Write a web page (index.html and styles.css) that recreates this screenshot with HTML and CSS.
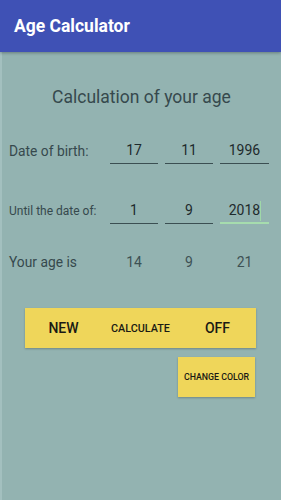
FILE: index.html
```html
<!DOCTYPE html>
<html>
<head>
<meta charset="utf-8">
<link rel="stylesheet" href="styles.css">
</head>
<body>
<div class="app">
  <header class="appbar">Age Calculator</header>
  <main class="content">
    <h1 class="title">Calculation of your age</h1>
    <div class="row row-birth">
      <span class="label">Date of birth:</span>
      <span class="field">17</span>
      <span class="field">11</span>
      <span class="field">1996</span>
    </div>
    <div class="row row-until">
      <span class="label label-small">Until the date of:</span>
      <span class="field">1</span>
      <span class="field">9</span>
      <span class="field field-active">2018<span class="cursor"></span></span>
    </div>
    <div class="row row-age">
      <span class="label">Your age is</span>
      <span class="value">14</span>
      <span class="value">9</span>
      <span class="value">21</span>
    </div>
    <div class="bar">
      <span class="btn btn-big">NEW</span>
      <span class="btn btn-small">CALCULATE</span>
      <span class="btn btn-big">OFF</span>
    </div>
    <div class="actions">
      <span class="change">CHANGE COLOR</span>
    </div>
  </main>
</div>
</body>
</html>
```
FILE: styles.css
```css
html, body {
  margin: 0;
  padding: 0;
}
body {
  font-family: Roboto, "Liberation Sans", sans-serif;
  background: #93b3b1;
  width: 281px;
  height: 500px;
  overflow: hidden;
}
.app {
  height: 500px;
  border-left: 2px solid #a3c0bf;
  box-sizing: border-box;
}
.appbar {
  height: 52px;
  background: #3f51b5;
  color: #ffffff;
  font-size: 17.5px;
  font-weight: 700;
  line-height: 52px;
  padding-left: 14px;
  margin-left: -2px;
  box-shadow: 0 1px 3px rgba(0,0,0,0.3);
  position: relative;
}
.title {
  margin: 33px 0 0;
  font-size: 17.5px;
  font-weight: 400;
  color: #36494d;
  text-align: center;
  line-height: 24px;
}
.row {
  display: grid;
  grid-template-columns: 94px 48px 48px 49px;
  column-gap: 7px;
  align-items: end;
  padding-left: 7px;
  color: #36494d;
}
.row-birth {
  margin-top: 30px;
}
.row-until {
  margin-top: 35px;
}
.row-age {
  margin-top: 27px;
}
.label {
  font-size: 13.8px;
  line-height: 22px;
  padding-bottom: 2px;
  white-space: nowrap;
}
.label-small {
  font-size: 12px;
}
.field {
  position: relative;
  text-align: center;
  font-size: 14px;
  line-height: 22px;
  color: #1e2a2c;
  border-bottom: 1px solid #3b4f52;
  padding-bottom: 2px;
}
.field-active {
  border-bottom: 2px solid #a6dcae;
  padding-bottom: 1px;
}
.cursor {
  position: absolute;
  right: 8px;
  top: 2px;
  width: 1px;
  height: 20px;
  background: #9fd8a8;
}
.value {
  text-align: center;
  font-size: 14px;
  line-height: 22px;
  color: #3d5154;
  padding-bottom: 2px;
}
.bar {
  margin: 33px 0 0 23px;
  height: 40px;
  background: #efd65a;
  display: grid;
  grid-template-columns: 1fr 1fr 1fr;
  align-items: center;
  box-shadow: 0 1px 2px rgba(0,0,0,0.25);
  width: 231px;
  box-sizing: border-box;
}
.btn {
  text-align: center;
  color: #1a1a14;
}
.btn-big {
  font-size: 14px;
  font-weight: 500;
}
.btn-small {
  font-size: 10.8px;
  font-weight: 500;
}
.actions {
  display: flex;
  justify-content: flex-end;
  padding-right: 26px;
  margin-top: 9px;
}
.change {
  width: 77px;
  height: 40px;
  background: #efd65a;
  color: #1a1a14;
  font-size: 8.8px;
  font-weight: 500;
  display: flex;
  align-items: center;
  justify-content: center;
  box-shadow: 0 1px 2px rgba(0,0,0,0.25);
  white-space: nowrap;
}
```
